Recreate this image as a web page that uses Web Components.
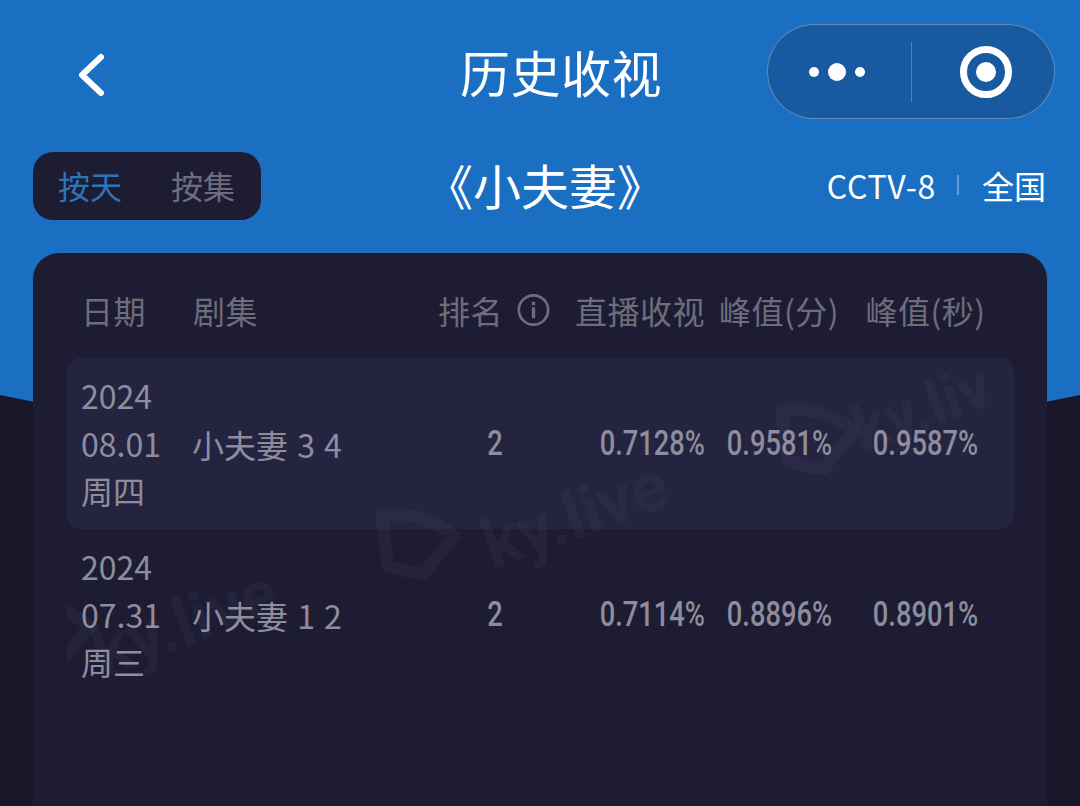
<!DOCTYPE html>
<html lang="zh">
<head>
<meta charset="utf-8">
<title>历史收视</title>
<style>
html, body { margin: 0; padding: 0; background: #181729; }
body { font-family: "Noto Sans CJK SC", "Noto Sans", sans-serif; }
</style>
</head>
<body>
<rating-app>
	<nav-bar>历史收视</nav-bar>
	<show-bar channel="CCTV-8" area="全国">《小夫妻》</show-bar>
	<rating-table>
		<rating-row year="2024" day="08.01" week="周四" name="小夫妻 3 4" rank="2" live="0.7128%" minute="0.9581%" second="0.9587%" active></rating-row>
		<rating-row year="2024" day="07.31" week="周三" name="小夫妻 1 2" rank="2" live="0.7114%" minute="0.8896%" second="0.8901%"></rating-row>
	</rating-table>
</rating-app>

<script>
class RatingApp extends HTMLElement {
	constructor() {
		super();
		this.attachShadow({mode:'open'});
		this.shadowRoot.innerHTML = `
			<style>
			:host { display: flex; flex-direction: column; position: relative; width: 1080px; height: 806px; overflow: hidden; background: #181729; }
			svg { position: absolute; left: 0; top: 0; }
			.content { position: relative; display: flex; flex-direction: column; height: 100%; }
			</style>
			<svg width="1080" height="500"><path d="M0 0H1080V395L1040 403V480H40V403L0 395Z" fill="#1b6fc2"/></svg>
			<div class="content"><slot></slot></div>
		`;
	}
}

class NavBar extends HTMLElement {
	constructor() {
		super();
		this.attachShadow({mode:'open'});
		this.shadowRoot.innerHTML = `
			<style>
			:host { display: grid; grid-template-columns: 382px auto 1fr; align-items: center; box-sizing: border-box; height: 152px; padding: 24px 25px 33px 78px; color: #fff; }
			.back { display: block; margin-top: 6px; }
			.title { font-size: 50px; line-height: 95px; letter-spacing: .5px; }
			.capsule { justify-self: end; display: flex; align-items: center; box-sizing: border-box; width: 288px; height: 95px; border-radius: 48px; border: 1.5px solid rgba(255,255,255,.3); background: #175a9f; }
			.capsule > div { flex: 1; display: flex; justify-content: center; align-items: center; height: 60px; }
			.capsule > div:first-child { border-right: 1.5px solid rgba(255,255,255,.25); }
			.dots { margin-right: 4px; }
			.record { margin-left: 6px; }
			</style>
			<svg class="back" width="30" height="46" viewBox="0 0 30 46"><path d="M23 5L4 23L23 41" fill="none" stroke="#fff" stroke-width="6" stroke-linecap="round" stroke-linejoin="round"/></svg>
			<div class="title"><slot></slot></div>
			<div class="capsule">
				<div><svg class="dots" width="60" height="20" viewBox="0 0 60 20"><circle cx="7" cy="10" r="5" fill="#fff"/><circle cx="30" cy="10" r="9" fill="#fff"/><circle cx="53" cy="10" r="5" fill="#fff"/></svg></div>
				<div><svg class="record" width="56" height="56" viewBox="0 0 56 56"><circle cx="28" cy="28" r="22.5" fill="none" stroke="#fff" stroke-width="7"/><circle cx="28" cy="28" r="10" fill="#fff"/></svg></div>
			</div>
		`;
	}
}

class ShowBar extends HTMLElement {
	constructor() {
		super();
		this.attachShadow({mode:'open'});
		this.shadowRoot.innerHTML = `
			<style>
			:host { display: grid; grid-template-columns: 392px 240px 1fr; align-items: center; box-sizing: border-box; height: 101px; padding: 0 34px 33px 33px; color: #fff; }
			.tabs { display: flex; box-sizing: border-box; width: 228px; height: 68px; padding: 0 0 2px 25px; gap: 49px; align-items: center; border-radius: 20px; background: #1e1c33; font-size: 32px; color: #6f6e7d; }
			.tabs .on { color: #2a76bd; }
			.name { font-size: 48px; line-height: 64px; padding-bottom: 4px; white-space: nowrap; }
			.meta { display: flex; justify-content: flex-end; align-items: center; font-size: 32px; line-height: 66px; padding-bottom: 2px; }
			.ch { letter-spacing: .7px; }
			.sep { width: 2px; height: 20px; margin: 0 23px 0 21px; background: #5f9fdc; }
			</style>
			<div class="tabs"><span class="on">按天</span><span>按集</span></div>
			<div class="name"><slot></slot></div>
			<div class="meta"><span class="ch"></span><span class="sep"></span><span class="area"></span></div>
		`;
		this.shadowRoot.querySelector('.ch').textContent = this.getAttribute('channel');
		this.shadowRoot.querySelector('.area').textContent = this.getAttribute('area');
	}
}

class RatingTable extends HTMLElement {
	constructor() {
		super();
		this.attachShadow({mode:'open'});
		const logo = (x, y) => `<svg class="logo" style="left:${x}px;top:${y}px" width="100" height="100" viewBox="0 0 120 120"><path d="M13 23Q60 15 100 47L63 92Q40 90 20 82Z" fill="none" stroke="rgba(255,255,255,.03)" stroke-width="15" stroke-linejoin="round"/></svg>`;
		this.shadowRoot.innerHTML = `
			<style>
			:host { display: block; position: relative; overflow: hidden; box-sizing: border-box; flex: 1; margin: 0 33px; padding: 0 33px 0 34px; border-radius: 26px 26px 0 0; background: #1e1c33; }
			.head { display: grid; grid-template-columns: 112px 247px 110px 155px 148px 145px; height: 105px; padding: 9px 0 0 14px; align-items: center; box-sizing: border-box; font-size: 32px; letter-spacing: .5px; color: #6e6d7c; white-space: nowrap; }
			.rank { display: flex; align-items: center; gap: 14px; margin-left: -2px; }
			.right { text-align: right; }
			.center { text-align: center; }
			.marks { position: absolute; left: 34px; right: 33px; top: 0; bottom: 0; overflow: hidden; pointer-events: none; }
			.mark { position: absolute; color: rgba(255,255,255,.03); font: bold 68px/70px Roboto, sans-serif; white-space: nowrap; transform: rotate(-20deg); transform-origin: left center; }
			.small { font-size: 62px; }
			.logo { position: absolute; }
			</style>
			<div class="head">
				<span>日期</span>
				<span>剧集</span>
				<span class="rank">排名<svg width="36" height="36" viewBox="0 0 36 36"><circle cx="18" cy="18" r="16" fill="none" stroke="#6e6d7c" stroke-width="3"/><rect x="16.2" y="15" width="3.6" height="12" fill="#6e6d7c"/><rect x="16.2" y="9" width="3.6" height="3.6" fill="#6e6d7c"/></svg></span>
				<span class="right">直播收视</span>
				<span class="center">峰值(分)</span>
				<span class="center">峰值(秒)</span>
			</div>
			<slot></slot>
			<div class="marks">
				${logo(304, 244)}
				<span class="mark" style="left:418px;top:260px">ky.live</span>
				${logo(704, 139)}
				<span class="mark small" style="left:788px;top:144px">ky.liv</span>
				${logo(-60, 334)}
				<span class="mark" style="left:28px;top:367px">ky.live</span>
			</div>
		`;
	}
}

class RatingRow extends HTMLElement {
	constructor() {
		super();
		this.attachShadow({mode:'open'});
		const a = (n) => this.getAttribute(n);
		this.shadowRoot.innerHTML = `
			<style>
			:host { display: grid; grid-template-columns: 111px 248px 110px 155px 148px 145px; align-items: center; box-sizing: border-box; height: 171px; padding-left: 14px; border-radius: 14px; font-size: 32px; color: #8e8d9d; white-space: nowrap; }
			:host([active]) { background: #252440; }
			.date { line-height: 47.5px; }
			.name { word-spacing: 2px; }
			.num { font-family: Roboto, sans-serif; font-size: 35px; font-weight: 500; line-height: 44px; }
			.num span { display: inline-block; transform: scaleX(.78); }
			.rank { text-align: center; }
			.right { text-align: right; }
			.right span { transform-origin: right center; }
			.center { text-align: center; }
			</style>
			<div class="date">${a('year')}<br>${a('day')}<br>${a('week')}</div>
			<div class="name">${a('name')}</div>
			<div class="num rank"><span>${a('rank')}</span></div>
			<div class="num right"><span>${a('live')}</span></div>
			<div class="num center"><span>${a('minute')}</span></div>
			<div class="num center"><span>${a('second')}</span></div>
		`;
	}
}

window.customElements.define('rating-app', RatingApp);
window.customElements.define('nav-bar', NavBar);
window.customElements.define('show-bar', ShowBar);
window.customElements.define('rating-table', RatingTable);
window.customElements.define('rating-row', RatingRow);
</script>
</body>
</html>
